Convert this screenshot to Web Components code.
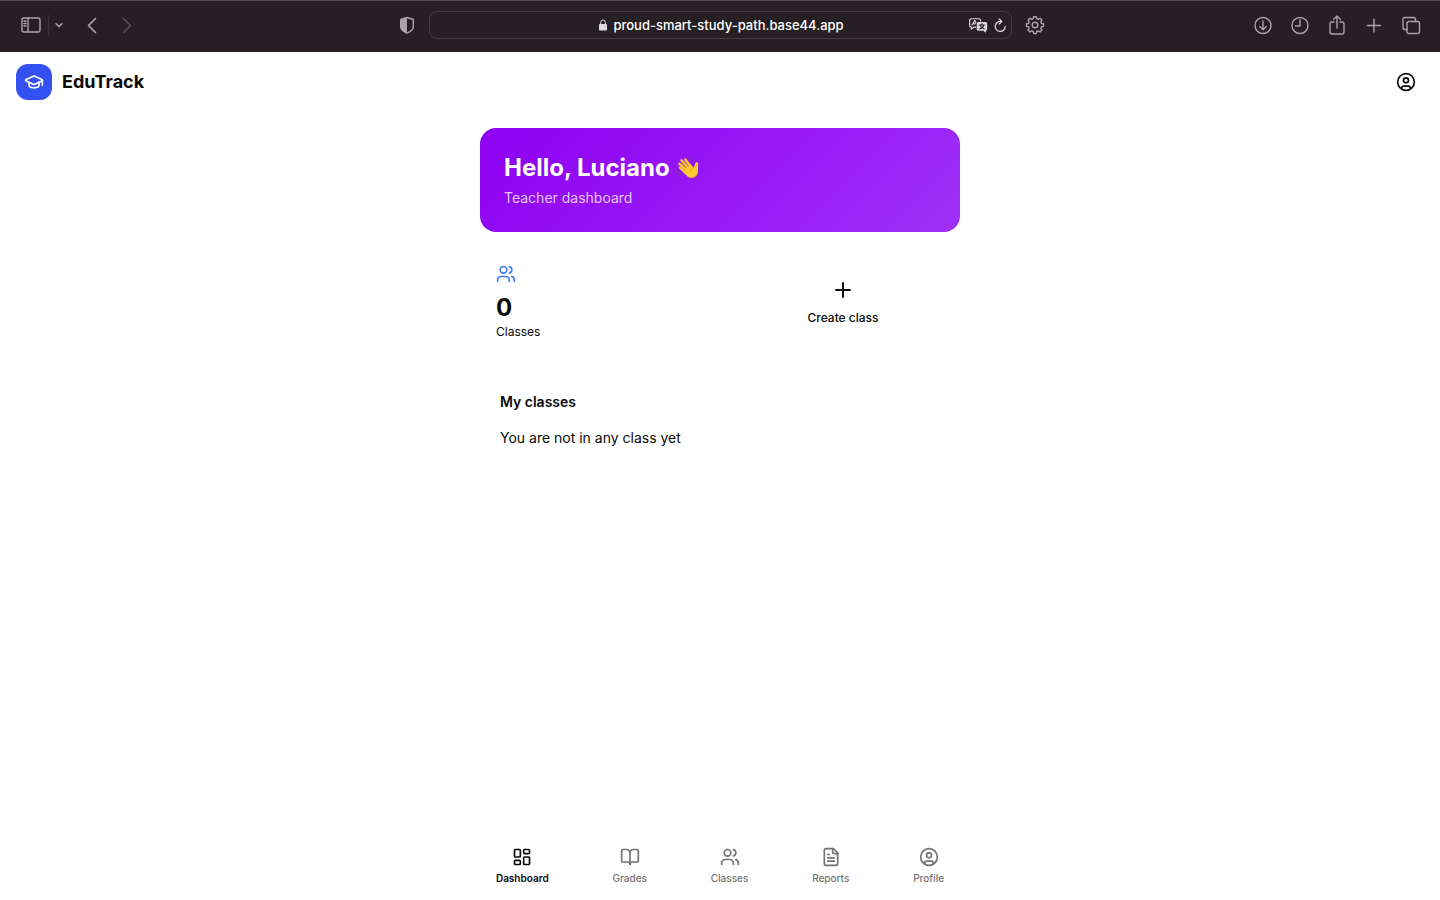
<!DOCTYPE html>
<html lang="en">
<head>
<meta charset="utf-8">
<meta name="viewport" content="width=device-width, initial-scale=1">
<title>EduTrack</title>
<style>
  body {
    margin: 0;
    background: #fff;
    color: #0a0a0a;
    font: 14px/20px Inter, "Open Sans", sans-serif;
  }
</style>
</head>
<body>
<edu-app>
  <browser-toolbar slot="toolbar" address="proud-smart-study-path.base44.app"></browser-toolbar>
  <edu-header slot="header">EduTrack</edu-header>
  <edu-hero name="Luciano">Teacher dashboard</edu-hero>
  <edu-tiles>
    <edu-stat icon="users" value="0">Classes</edu-stat>
    <edu-action icon="plus">Create class</edu-action>
  </edu-tiles>
  <edu-panel heading="My classes">You are not in any class yet</edu-panel>
  <edu-tabs slot="tabs">
    <edu-tab icon="dashboard" href="#dashboard" active>Dashboard</edu-tab>
    <edu-tab icon="book" href="#grades">Grades</edu-tab>
    <edu-tab icon="users" href="#classes">Classes</edu-tab>
    <edu-tab icon="file" href="#reports">Reports</edu-tab>
    <edu-tab icon="profile" href="#profile">Profile</edu-tab>
  </edu-tabs>
</edu-app>

<script>
const ICONS = {
  cap: '<path d="M21.42 10.922a1 1 0 0 0-.019-1.838L12.83 5.18a2 2 0 0 0-1.66 0L2.6 9.08a1 1 0 0 0 0 1.832l8.57 3.908a2 2 0 0 0 1.66 0z"/><path d="M22 10v6"/><path d="M6 12.5V16a6 3 0 0 0 12 0v-3.5"/>',
  profile: '<circle cx="12" cy="12" r="10"/><circle cx="12" cy="10" r="3"/><path d="M7 20.662V19a2 2 0 0 1 2-2h6a2 2 0 0 1 2 2v1.662"/>',
  users: '<path d="M16 21v-2a4 4 0 0 0-4-4H6a4 4 0 0 0-4 4v2"/><circle cx="9" cy="7" r="4"/><path d="M22 21v-2a4 4 0 0 0-3-3.87"/><path d="M16 3.13a4 4 0 0 1 0 7.75"/>',
  plus: '<path d="M5 12h14"/><path d="M12 5v14"/>',
  dashboard: '<rect x="3" y="3" width="7" height="9" rx="1"/><rect x="14" y="3" width="7" height="5" rx="1"/><rect x="14" y="12" width="7" height="9" rx="1"/><rect x="3" y="16" width="7" height="5" rx="1"/>',
  book: '<path d="M12 7v14"/><path d="M3 18a1 1 0 0 1-1-1V4a1 1 0 0 1 1-1h5a4 4 0 0 1 4 4 4 4 0 0 1 4-4h5a1 1 0 0 1 1 1v13a1 1 0 0 1-1 1h-6a3 3 0 0 0-3 3 3 3 0 0 0-3-3z"/>',
  file: '<path d="M15 2H6a2 2 0 0 0-2 2v16a2 2 0 0 0 2 2h12a2 2 0 0 0 2-2V7Z"/><path d="M14 2v4a2 2 0 0 0 2 2h4"/><path d="M10 9H8"/><path d="M16 13H8"/><path d="M16 17H8"/>',
  sidebar: '<rect x="3" y="5" width="18" height="14" rx="2"/><path d="M9 5v14"/><path d="M5 8h2M5 10.5h2M5 13h2"/>',
  caret: '<path stroke-width="2" d="M8.500 10.500l3.500 3.300 3.500-3.300"/>',
  back: '<path stroke-width="1.700" d="M15.500 5.500L8.500 12.500l7 7"/>',
  forward: '<path stroke-width="1.700" d="M8.500 5.500l7 7-7 7"/>',
  shield: '<path d="M12 4.500l6.300 2v7.200c0 3-3 5-6.300 6.500-3.300-1.500-6.300-3.500-6.300-6.500V6.500z"/><path fill="currentColor" stroke="none" d="M12 4.500v15.700c-3.300-1.500-6.300-3.500-6.300-6.500V6.500z"/>',
  gear: '<circle cx="12" cy="12" r="2.800"/><path d="M10.300 5.700 10.600 3.700h2.800l.3 2 1.600.7 1.700-1.200 2 2-1.200 1.700.7 1.600 2 .3v2.600l-2 .3-.7 1.600 1.200 1.700-2 2-1.700-1.200-1.600.7-.3 2h-2.800l-.3-2-1.600-.7L7 19l-2-2 1.200-1.700-.7-1.600-2-.3v-2.600l2-.3.7-1.600L5 7.200l2-2 1.700 1.200z"/>',
  download: '<circle cx="12" cy="12.500" r="8"/><path d="M12 8v8.500M8.800 13.500l3.200 3.200 3.200-3.200"/>',
  clock: '<circle cx="12" cy="12.500" r="8"/><path d="M12 7v6H7.500"/>',
  share: '<path d="M9 9H7a2 2 0 0 0-2 2v8a2 2 0 0 0 2 2h10a2 2 0 0 0 2-2v-8a2 2 0 0 0-2-2h-2"/><path d="M12 15V3.500M8.500 6.500L12 3l3.500 3.500"/>',
  add: '<path d="M5.500 12.500h13M12 6v13"/>',
  windows: '<path d="M8 16.500H6a2 2 0 0 1-2-2V6.500a2 2 0 0 1 2-2h8.500a2 2 0 0 1 2 2V8.500"/><rect x="8" y="8.500" width="12.500" height="12" rx="2"/>',
  lock: '<rect x="4" y="10" width="16" height="13" rx="2" fill="currentColor" stroke="none"/><path d="M7.500 11V6.500a4.500 4.500 0 0 1 9 0V11" stroke-width="2"/>',
  translate: '<path d="M9.500 14.500H7l-3 2.500v-2.500a2 2 0 0 1-2-2v-6a2 2 0 0 1 2-2h9a2 2 0 0 1 2 2V7"/><path d="M5 12l3-5.500 1.500 2.500M6 10.500h3"/><path fill="currentColor" stroke="none" d="M12.500 8.500H21a2 2 0 0 1 2 2V17a2 2 0 0 1-1.500 2v2.500L18.500 19h-6a2 2 0 0 1-2-2v-6.500a2 2 0 0 1 2-2z"/><path stroke="#262024" d="M13.500 12h6.500M16.700 10.500V12M14 16.800c3-1 4.500-2.600 4.700-4.800M14.700 12.500c.6 2 2.300 3.500 4.800 4.300"/>',
  reload: '<path stroke-width="2" d="M19.500 13.500A8 8 0 1 1 12 5.500h1.500M10 1.500l4 4-4 4"/>'
};

const svg = (name, size, stroke = 2) =>
  `<svg width="${ size }" height="${ size }" viewBox="0 0 24 24" fill="none" stroke="currentColor" stroke-width="${ stroke }" stroke-linecap="round" stroke-linejoin="round" aria-hidden="true">${ ICONS[name] }</svg>`;

const RESET = `
  *, :host { box-sizing: border-box; }
  svg { display: block; flex: none; }
  button {
    display: flex;
    align-items: center;
    justify-content: center;
    margin: 0;
    padding: 0;
    border: 0;
    background: none;
    color: inherit;
    font: inherit;
    cursor: pointer;
  }
`;

class EduElement extends HTMLElement {
  constructor() {
    super();
    this.attachShadow({ mode: 'open' });
  }

  connectedCallback() {
    this.shadowRoot.innerHTML = `<style>${ RESET }${ this.styles() }</style>${ this.html() }`;
  }
}

customElements.define('edu-app', class extends EduElement {
  styles() {
    return `
      :host {
        display: flex;
        flex-direction: column;
        min-height: 100vh;
      }
      main {
        display: flex;
        flex: 1;
        flex-direction: column;
        gap: 16px;
        width: 100%;
        max-width: 512px;
        margin: 0 auto;
        padding: 16px;
      }
    `;
  }

  html() {
    return `
      <slot name="toolbar"></slot>
      <slot name="header"></slot>
      <main><slot></slot></main>
      <slot name="tabs"></slot>
    `;
  }
});

customElements.define('browser-toolbar', class extends EduElement {
  styles() {
    return `
      :host {
        display: grid;
        grid-template-columns: 1fr minmax(0, 583px) 1fr;
        align-items: center;
        height: 52px;
        padding-bottom: 3px;
        border-top: 1px solid #524d51;
        background: #262024;
        color: #aaa4a8;
      }
      .side {
        display: flex;
        align-items: center;
        justify-content: space-between;
        padding: 0 10px;
      }
      .side.-left { padding-left: 19px; }
      .side.-right {
        padding-left: 11px;
        padding-right: 17px;
      }
      .group {
        display: flex;
        align-items: center;
      }
      .tools { gap: 13px; }
      .menu {
        margin-left: 5px;
        border-left: 1px solid #3b3539;
      }
      .back { margin-left: 11px; }
      .forward {
        margin-left: 11px;
        color: #544e52;
      }
      .address {
        display: flex;
        align-items: center;
        height: 28px;
        border: 1px solid #423c40;
        border-radius: 8px;
        color: #dedadd;
      }
      label {
        display: flex;
        flex: 1;
        align-items: center;
        justify-content: center;
        gap: 4px;
        padding-left: 44px;
        min-width: 0;
      }
      input {
        field-sizing: content;
        min-width: 0;
        padding: 0;
        border: 0;
        outline: 0;
        background: none;
        color: #fff;
        font: 500 13px/20px Inter, sans-serif;
      }
      .actions {
        gap: 5px;
        padding-right: 3px;
      }
    `;
  }

  html() {
    const button = (icon, label, cls = '', size = 24) =>
      `<button class="${ cls }" type="button" aria-label="${ label }">${ svg(icon, size, 1.4) }</button>`;
    return `
      <div class="side -left">
        <div class="group">
          ${ button('sidebar', 'Show sidebar') }
          ${ button('caret', 'Tab groups', 'menu', 20) }
          ${ button('back', 'Back', 'back') }
          ${ button('forward', 'Forward', 'forward') }
        </div>
        ${ button('shield', 'Privacy report') }
      </div>
      <div class="address">
        <label>
          ${ svg('lock', 12) }
          <input type="text" aria-label="Address" value="${ this.getAttribute('address') }">
        </label>
        <div class="group actions">
          ${ button('translate', 'Translate', '', 20) }
          ${ button('reload', 'Reload', '', 15) }
        </div>
      </div>
      <div class="side -right">
        ${ button('gear', 'Settings') }
        <div class="group tools">
          ${ button('download', 'Downloads') }
          ${ button('clock', 'History') }
          ${ button('share', 'Share') }
          ${ button('add', 'New tab') }
          ${ button('windows', 'Tab overview') }
        </div>
      </div>
    `;
  }
});

customElements.define('edu-header', class extends EduElement {
  styles() {
    return `
      :host { display: block; }
      header {
        display: flex;
        align-items: center;
        justify-content: space-between;
        padding: 12px 16px;
      }
      a {
        display: flex;
        align-items: center;
        gap: 10px;
        color: inherit;
        font-size: 18px;
        line-height: 28px;
        font-weight: 700;
        text-decoration: none;
      }
      .logo {
        display: grid;
        place-items: center;
        width: 36px;
        height: 36px;
        border-radius: 12px;
        background: #3350f0;
        color: #fff;
      }
      button {
        width: 36px;
        height: 36px;
      }
    `;
  }

  html() {
    return `
      <header>
        <a href="#dashboard"><span class="logo">${ svg('cap', 20) }</span><slot></slot></a>
        <button type="button" aria-label="Account">${ svg('profile', 20) }</button>
      </header>
    `;
  }
});

customElements.define('edu-hero', class extends EduElement {
  styles() {
    return `
      :host {
        display: block;
        padding: 24px;
        border-radius: 16px;
        background: linear-gradient(135deg, #8f00f2, #9f30f8);
        color: #fff;
      }
      h1 {
        display: flex;
        align-items: center;
        gap: 6px;
        margin: 0 0 4px;
        font-size: 24px;
        line-height: 32px;
        font-weight: 700;
      }
      p {
        margin: 0;
        color: #e6c6fd;
      }
    `;
  }

  html() {
    return `
      <h1>
        Hello, ${ this.getAttribute('name') }
        <svg width="24" height="24" viewBox="0 0 24 24" fill="none" stroke-linecap="round" stroke-linejoin="round" role="img" aria-label="waving hand">
          <g stroke="#ffcb30" stroke-width="2.400">
            <path d="M10.500 17.500L4 11.500"/>
            <path d="M11 14.500L3.300 7.700"/>
            <path d="M12.500 12L5.500 4.400"/>
            <path d="M15 11L9.300 3.400"/>
          </g>
          <path fill="#ffcb30" d="M9 12.500l5.500-4.300 3 3.300c1.200-1.300 1.400-2.600 1.700-4 .4-1.700 2.900-1.600 3 .2.200 2-.4 3.600-.2 5.600.3 3.200-.5 5.600-2.600 7.300-2.500 2-5.600 1.700-7.700 0L7.500 16.500z"/>
          <path stroke="#e59b16" stroke-width=".700" d="M4.700 10.500l5 4.500M5.800 8.200l5.200 4.600M8 5.500l4.800 5.200M17.500 11.500c-2 .8-3 2.200-2.700 4.200M11.500 20.300c2.800 2.200 6.500 1.700 8.800-1"/>
          <path stroke="#674080" stroke-width=".900" d="M.800 15.500c.5 2.500 2 4.300 4.500 5M2.500 15.500c.4 1.600 1.300 2.700 2.800 3.400M14 1.300c2 .4 3.300 1.600 3.900 3.600M13.700 3.500c1.200.5 2 1.400 2.300 2.500"/>
        </svg>
      </h1>
      <p><slot></slot></p>
    `;
  }
});

customElements.define('edu-tiles', class extends EduElement {
  styles() {
    return `
      :host {
        display: grid;
        grid-template-columns: 1fr 1fr;
        gap: 12px;
      }
    `;
  }

  html() {
    return '<slot></slot>';
  }
});

customElements.define('edu-stat', class extends EduElement {
  styles() {
    return `
      :host {
        display: block;
        padding: 16px;
        border-radius: 16px;
        font-size: 12px;
        line-height: 16px;
      }
      svg { color: #3f7bff; }
      strong {
        display: block;
        margin-top: 8px;
        font-size: 24px;
        line-height: 32px;
        font-weight: 700;
      }
    `;
  }

  html() {
    return `
      ${ svg(this.getAttribute('icon'), 20) }
      <strong>${ this.getAttribute('value') }</strong>
      <slot></slot>
    `;
  }
});

customElements.define('edu-action', class extends EduElement {
  styles() {
    return `
      :host { display: grid; }
      button {
        flex-direction: column;
        gap: 8px;
        padding: 16px;
        border-radius: 16px;
        font-size: 12px;
        line-height: 16px;
        font-weight: 500;
      }
    `;
  }

  html() {
    return `<button type="button">${ svg(this.getAttribute('icon'), 24) }<slot></slot></button>`;
  }
});

customElements.define('edu-panel', class extends EduElement {
  styles() {
    return `
      :host {
        display: block;
        padding: 20px;
      }
      h2 {
        margin: 0 0 16px;
        font-size: 14px;
        line-height: 20px;
        font-weight: 600;
      }
      p { margin: 0; }
    `;
  }

  html() {
    return `
      <h2>${ this.getAttribute('heading') }</h2>
      <p><slot></slot></p>
    `;
  }
});

customElements.define('edu-tabs', class extends EduElement {
  styles() {
    return `
      :host {
        display: block;
        position: sticky;
        bottom: 0;
        background: #fff;
      }
      nav {
        display: flex;
        align-items: center;
        justify-content: space-around;
        max-width: 512px;
        margin: 0 auto;
        padding: 8px 0;
      }
    `;
  }

  html() {
    return '<nav aria-label="Main"><slot></slot></nav>';
  }
});

customElements.define('edu-tab', class extends EduElement {
  styles() {
    return `
      :host {
        display: block;
        color: #737373;
        font-size: 10px;
        line-height: 15px;
        font-weight: 500;
      }
      :host([active]) {
        color: #0a0a0a;
        font-weight: 600;
      }
      a {
        display: flex;
        flex-direction: column;
        align-items: center;
        gap: 4px;
        padding: 6px 12px;
        color: inherit;
        text-decoration: none;
      }
    `;
  }

  html() {
    const current = this.hasAttribute('active') ? 'aria-current="page"' : '';
    return `<a href="${ this.getAttribute('href') }" ${ current }>${ svg(this.getAttribute('icon'), 20) }<slot></slot></a>`;
  }
});
</script>
</body>
</html>
